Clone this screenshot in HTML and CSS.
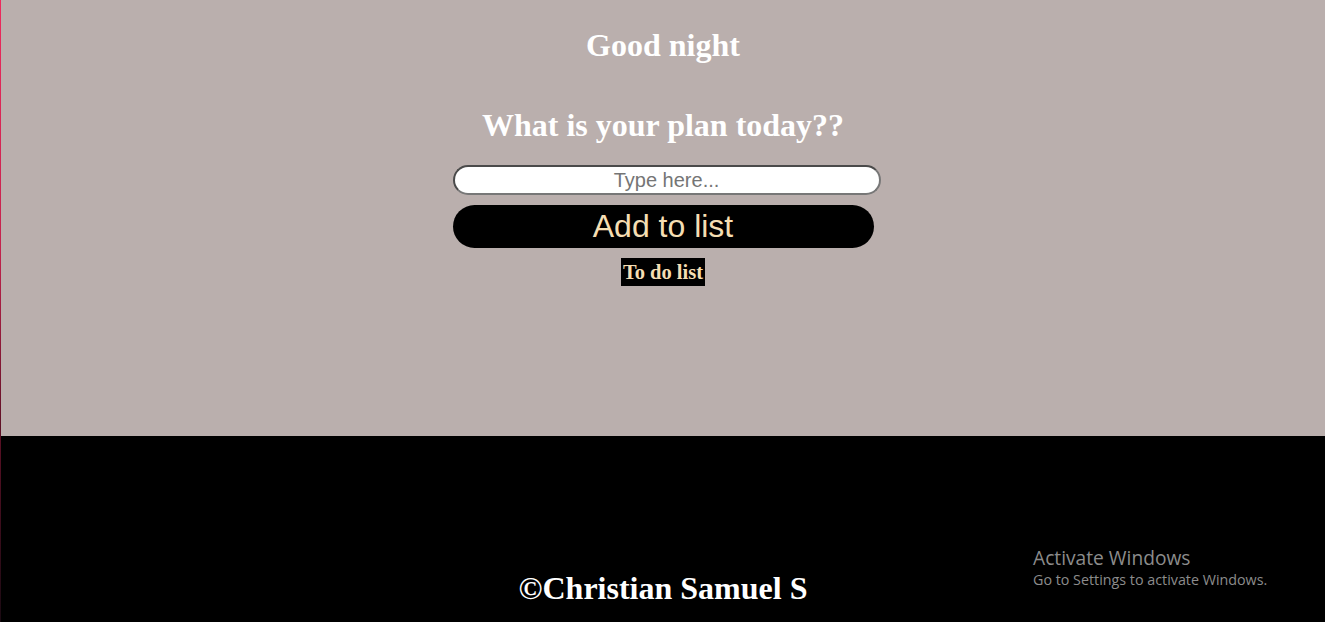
FILE: index.html
```html
<!DOCTYPE html>
<html>
<head>
<meta charset="utf-8">
<link rel="stylesheet" href="styles.css">
</head>
<body>
<div class="page">
  <main class="main">
    <h1 class="greet">Good night</h1>
    <h1 class="question">What is your plan today??</h1>
    <div class="form">
      <input class="task-input" type="text" placeholder="Type here...">
      <button class="add-btn">Add to list</button>
    </div>
    <h3 class="list-title">To do list</h3>
  </main>
  <footer class="footer">
    <div class="copy">©Christian Samuel S</div>
  </footer>
  <div class="activate">
    <div class="act-title">Activate Windows</div>
    <div class="act-sub">Go to Settings to activate Windows.</div>
  </div>
</div>
</body>
</html>
```

FILE: styles.css
```css
html, body {
  margin: 0;
  padding: 0;
  height: 100%;
  overflow: hidden;
}
body {
  font-family: "Liberation Serif", "Times New Roman", serif;
  background: #000;
}
.page {
  position: relative;
  height: 622px;
  display: flex;
  flex-direction: column;
  border-left: 1px solid;
  border-image: linear-gradient(to bottom, #ee2a5d 0%, #c4234d 40%, #5a1024 70%, #1a0a12 100%) 1;
}
.main {
  height: 436px;
  background: #baafad;
  display: flex;
  flex-direction: column;
  align-items: center;
  box-sizing: border-box;
  padding-top: 27px;
}
.greet, .question {
  margin: 0;
  color: #fff;
  font-size: 32px;
  font-weight: bold;
  line-height: 36px;
}
.question {
  margin-top: 44px;
}
.form {
  margin-top: 22px;
  width: 437px;
  padding-left: 9px;
  box-sizing: border-box;
  display: flex;
  flex-direction: column;
  align-items: flex-start;
  margin-left: -2px;
}
.task-input {
  width: 428px;
  height: 30px;
  box-sizing: border-box;
  border: 2px solid #4a4a4a;
  border-bottom-color: #777;
  border-right-color: #777;
  border-radius: 15px;
  background: #fff;
  text-align: center;
  font-family: "Liberation Sans", Arial, sans-serif;
  font-size: 20px;
  padding: 0 0 0 0;
  outline: none;
}
.task-input::placeholder {
  color: #757575;
}
.add-btn {
  margin-top: 10px;
  width: 421px;
  height: 43px;
  border: none;
  border-radius: 22px;
  background: #000;
  color: #f5deb3;
  font-family: "Liberation Sans", Arial, sans-serif;
  font-size: 32px;
  padding: 0;
  line-height: 43px;
}
.list-title {
  margin: 10px 0 0 0;
  background: #000;
  color: #f5deb3;
  font-size: 20.5px;
  font-weight: bold;
  line-height: 28px;
  padding: 0 2px;
}
.footer {
  flex: 1;
  background: #000;
  display: flex;
  justify-content: center;
  align-items: flex-end;
}
.copy {
  color: #fff;
  font-size: 32px;
  font-weight: bold;
  line-height: 36px;
  margin-bottom: 16px;
}
.activate {
  position: absolute;
  left: 1032px;
  top: 545px;
  color: #8c8c8c;
  font-family: "Open Sans", "Noto Sans", sans-serif;
}
.act-title {
  font-size: 19.2px;
  line-height: 25px;
}
.act-sub {
  font-size: 14.3px;
  line-height: 20px;
}
```
